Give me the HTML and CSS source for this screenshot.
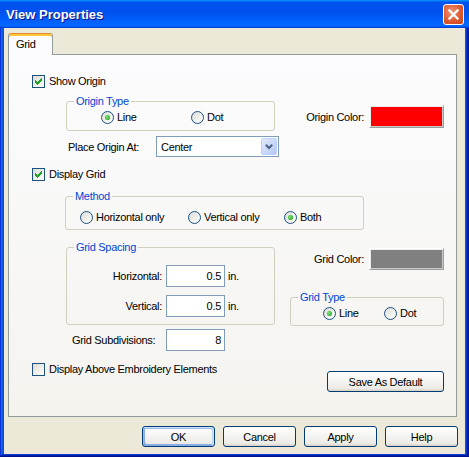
FILE: index.html
```html
<!DOCTYPE html>
<html>
<head>
<meta charset="utf-8">
<title>View Properties</title>
<link rel="stylesheet" href="styles.css">
</head>
<body>
<div class="window">
  <div class="titlebar">
    <span class="title">View Properties</span>
    <span class="close"><svg width="13" height="13" viewBox="0 0 13 13"><path d="M2.5 2.5 L10.5 10.5 M10.5 2.5 L2.5 10.5" stroke="#fff" stroke-width="2.3" stroke-linecap="square"/></svg></span>
  </div>
  <div class="client">
    <div class="tabs"><div class="tab">Grid</div></div>
    <div class="panel">
      <label class="check"><span class="cb"><svg width="11" height="11" viewBox="0 0 11 11"><path transform="translate(2 2)" fill="#21A121" d="M6 0h1v1h-1z M5 1h2v1h-2z M0 2h1v1h-1z M4 2h3v1h-3z M0 3h2v1h-2z M3 3h3v1h-3z M0 4h5v1h-5z M1 5h3v1h-3z M2 6h1v1h-1z"/></svg></span>Show Origin</label>

      <div class="row r-origin">
        <fieldset class="group g-origin">
          <legend>Origin Type</legend>
          <div class="opts">
            <span class="radio on w90"><i></i>Line</span>
            <span class="radio"><i></i>Dot</span>
          </div>
        </fieldset>
        <div class="colorfield cf-origin"><span>Origin Color:</span><span class="swatch red"></span></div>
      </div>

      <div class="row r-place">
        <span class="lbl-place">Place Origin At:</span>
        <div class="combo"><span class="combo-text">Center</span><span class="combo-btn"><svg width="14" height="15" viewBox="0 0 14 15"><path d="M3.8 5.8 L7 9 L10.2 5.8" fill="none" stroke="#4D6185" stroke-width="2"/></svg></span></div>
      </div>

      <label class="check r-grid"><span class="cb"><svg width="11" height="11" viewBox="0 0 11 11"><path transform="translate(2 2)" fill="#21A121" d="M6 0h1v1h-1z M5 1h2v1h-2z M0 2h1v1h-1z M4 2h3v1h-3z M0 3h2v1h-2z M3 3h3v1h-3z M0 4h5v1h-5z M1 5h3v1h-3z M2 6h1v1h-1z"/></svg></span>Display Grid</label>

      <fieldset class="group g-method">
        <legend>Method</legend>
        <div class="opts">
          <span class="radio w108"><i></i>Horizontal only</span>
          <span class="radio w96"><i></i>Vertical only</span>
          <span class="radio on"><i></i>Both</span>
        </div>
      </fieldset>

      <div class="row r-spacing">
        <fieldset class="group g-spacing">
          <legend>Grid Spacing</legend>
          <div class="fields">
            <div class="field"><span class="flabel">Horizontal:</span><input class="input" type="text" value="0.5"><span class="unit">in.</span></div>
            <div class="field"><span class="flabel">Vertical:</span><input class="input" type="text" value="0.5"><span class="unit">in.</span></div>
          </div>
        </fieldset>
        <div class="rightcol">
          <div class="colorfield cf-grid"><span>Grid Color:</span><span class="swatch gray"></span></div>
          <fieldset class="group g-type">
            <legend>Grid Type</legend>
            <div class="opts">
              <span class="radio on w61"><i></i>Line</span>
              <span class="radio"><i></i>Dot</span>
            </div>
          </fieldset>
        </div>
      </div>

      <div class="row r-sub">
        <span class="lbl-sub">Grid Subdivisions:</span><input class="input" type="text" value="8">
      </div>

      <div class="row r-last">
        <label class="check"><span class="cb"></span>Display Above Embroidery Elements</label>
        <button class="btn btn-save">Save As Default</button>
      </div>
    </div>
    <div class="buttons">
      <button class="btn btn-ok">OK</button>
      <button class="btn">Cancel</button>
      <button class="btn">Apply</button>
      <button class="btn">Help</button>
    </div>
  </div>
</div>
</body>
</html>
```

FILE: styles.css
```css
html, body {
  margin: 0;
  padding: 0;
}
body {
  width: 469px;
  height: 457px;
  overflow: hidden;
  background: #0054E3;
  font-family: "Liberation Sans", Arial, sans-serif;
  font-size: 11px;
  letter-spacing: -0.3px;
  color: #000;
}
.window {
  width: 469px;
  height: 457px;
  box-sizing: border-box;
  display: flex;
  flex-direction: column;
  background: #0054E3;
  box-shadow: inset -1px -1px #00138c, inset 1px 1px #0831d9, inset -2px -2px #001ea0, inset 2px 2px #166aee, inset -3px -3px #003bda, inset 3px 3px #0855dd;
  padding: 0 4px 3px 4px;
}
.titlebar {
  height: 28px;
  margin: 0 -4px;
  display: flex;
  align-items: center;
  padding: 0 5px 0 6px;
  background: linear-gradient(180deg, #0997ff, #0053ee 8%, #0050ee 40%, #0066ff 88%, #0066ff 93%, #005bff 95%, #003dd7 96%, #003dd7);
}
.title {
  color: #fff;
  font-weight: bold;
  font-size: 13px;
  letter-spacing: 0;
  text-shadow: 1px 1px #0f1089;
}
.close {
  margin-left: auto;
  width: 21px;
  height: 21px;
  box-sizing: border-box;
  border: 1px solid #fff;
  border-radius: 3px;
  background: radial-gradient(circle at 40% 35%, #f09374, #dd5a33 55%, #c4411c);
  display: flex;
  align-items: center;
  justify-content: center;
}
.close svg { display: block; }
.client {
  flex: 1;
  background: #ECE9D8;
  display: flex;
  flex-direction: column;
}
.tabs {
  display: flex;
  height: 21px;
  margin: 5px 0 0 4px;
}
.tab {
  position: relative;
  z-index: 1;
  width: 45px;
  height: 22px;
  box-sizing: border-box;
  background: #FCFCFE;
  border: 1px solid #919B9C;
  border-top: 1px solid #E68B2C;
  border-bottom: none;
  border-radius: 3px 3px 0 0;
  box-shadow: inset 0 2px #FFC73C;
  padding: 4px 0 0 7px;
  line-height: 13px;
}
.panel {
  margin-left: 4px;
  width: 449px;
  height: 363px;
  box-sizing: border-box;
  border: 1px solid #919B9C;
  background: linear-gradient(180deg, #FCFCFE, #F4F3EE);
  padding: 20px 12px 0 23px;
  display: flex;
  flex-direction: column;
}
.check {
  display: flex;
  align-items: center;
  gap: 4px;
  height: 13px;
  line-height: 13px;
  align-self: flex-start;
}
.cb {
  width: 13px;
  height: 13px;
  box-sizing: border-box;
  border: 1px solid #1C5180;
  background: linear-gradient(135deg, #DCDCD7, #FFFFFF);
}
.cb svg { display: block; }
.row { display: flex; }
.radio {
  display: flex;
  align-items: center;
  gap: 3px;
  height: 13px;
  line-height: 13px;
}
.radio i {
  position: relative;
  width: 13px;
  height: 13px;
  box-sizing: border-box;
  border-radius: 50%;
  border: 1px solid #1C5180;
  background: linear-gradient(135deg, #DCDCD7, #FFFFFF);
}
.radio.on i::after {
  content: "";
  position: absolute;
  left: 3px;
  top: 3px;
  width: 5px;
  height: 5px;
  border-radius: 50%;
  background: radial-gradient(circle at 40% 40%, #7CEA78, #21A121 80%);
}
.w90 { width: 90px; }
.w108 { width: 108px; }
.w96 { width: 96px; }
.w61 { width: 61px; }
.group {
  margin: 0;
  padding: 0;
  border: 1px solid #D0D0BF;
  border-radius: 3px;
  box-sizing: border-box;
  min-width: 0;
  min-inline-size: 0;
}
.group legend {
  margin-left: 7px;
  padding: 0 2px;
  color: #0046D5;
  line-height: 13px;
}
.opts { display: flex; }
.r-origin {
  margin-top: 7px;
  align-items: flex-start;
}
.g-origin {
  width: 209px;
  height: 36px;
  margin-left: 34px;
}
.g-origin .opts { padding: 3px 0 0 34px; }
.colorfield {
  margin-left: auto;
  display: flex;
  align-items: center;
  gap: 5px;
}
.cf-origin { margin-top: 10px; }
.swatch {
  width: 75px;
  height: 23px;
  box-sizing: border-box;
  border: 1px solid;
  border-color: #FFFFFF #9E9E9E #9E9E9E #FFFFFF;
  box-shadow: inset 1px 1px #ECECEC, inset -1px -1px #C9C9C9;
}
.swatch.red { background: #FF0000; }
.swatch.gray { background: #808080; height: 22px; }
.r-place {
  margin-top: 5px;
  align-items: center;
  height: 21px;
}
.lbl-place {
  margin-left: 36px;
  width: 88px;
}
.combo {
  width: 123px;
  height: 21px;
  box-sizing: border-box;
  border: 1px solid #7F9DB9;
  background: #fff;
  display: flex;
  align-items: center;
  padding-left: 4px;
}
.combo-text { flex: 1; }
.combo-btn {
  width: 16px;
  height: 17px;
  box-sizing: border-box;
  margin-right: 1px;
  border: 1px solid #BCCFF9;
  border-radius: 2px;
  background: linear-gradient(135deg, #E1EAFE, #B4C8F6);
  display: flex;
  align-items: center;
  justify-content: center;
}
.combo-btn svg { display: block; }
.r-grid { margin-top: 11px; }
.g-method {
  width: 299px;
  height: 40px;
  margin: 9px 0 0 33px;
  align-self: flex-start;
}
.g-method .opts { padding: 8px 0 0 14px; }
.r-spacing {
  margin-top: 11px;
  align-items: flex-start;
}
.g-spacing {
  width: 209px;
  height: 84px;
  margin-left: 34px;
}
.fields {
  padding-top: 11px;
  display: flex;
  flex-direction: column;
  gap: 8px;
}
.field {
  display: flex;
  align-items: center;
  height: 22px;
}
.flabel {
  width: 95px;
  margin-right: 4px;
  text-align: right;
}
.input {
  width: 59px;
  height: 22px;
  box-sizing: border-box;
  margin: 0;
  border: 1px solid #7F9DB9;
  background: #fff;
  text-align: right;
  padding: 0 3px;
  font: inherit;
  letter-spacing: inherit;
  color: #000;
  outline: none;
}
.unit { margin-left: 3px; }
.rightcol {
  margin-left: auto;
  display: flex;
  flex-direction: column;
  align-items: flex-end;
}
.cf-grid { margin-top: 7px; }
.g-type {
  width: 154px;
  height: 35px;
  margin-top: 21px;
}
.g-type .opts { padding: 3px 0 0 32px; }
.r-sub {
  margin-top: 3px;
  align-items: center;
  height: 22px;
}
.lbl-sub {
  margin-left: 40px;
  width: 94px;
}
.r-last {
  margin-top: 12px;
  align-items: flex-start;
}
.btn {
  width: 73px;
  height: 21px;
  box-sizing: border-box;
  margin: 0;
  padding: 0;
  border: 1px solid #003C74;
  border-radius: 3px;
  background: linear-gradient(180deg, #fff, #ecebe6 86%, #d6d0c5);
  font: inherit;
  letter-spacing: inherit;
  color: #000;
  display: flex;
  align-items: center;
  justify-content: center;
}
.btn-save {
  width: 117px;
  margin-left: auto;
  margin-top: 8px;
}
.btn-ok {
  box-shadow: inset -1px 1px #cee7ff, inset 1px 2px #98b8ea, inset -2px 2px #bcd4f6, inset 1px -1px #89ade4, inset 2px -2px #89ade4;
}
.buttons {
  display: flex;
  justify-content: flex-end;
  gap: 8px;
  margin-top: 9px;
  padding-right: 7px;
}
```
